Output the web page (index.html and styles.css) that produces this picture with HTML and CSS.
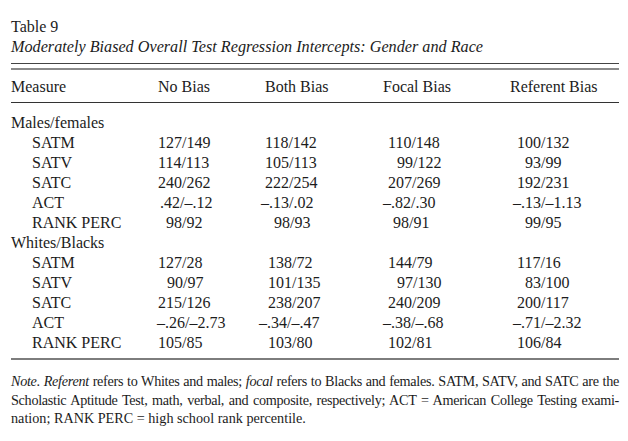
FILE: index.html
```html
<!DOCTYPE html>
<html>
<head>
<meta charset="utf-8">
<link rel="stylesheet" href="styles.css">
</head>
<body>
<div class="page">
  <div class="caption">Table 9</div>
  <div class="title">Moderately Biased Overall Test Regression Intercepts: Gender and Race</div>
  <div class="rule-top"></div>
  <div class="rule-double"></div>
  <div class="grid head">
    <div>Measure</div>
    <div>No Bias</div>
    <div>Both Bias</div>
    <div class="m-5">Focal Bias</div>
    <div class="m-7">Referent Bias</div>
  </div>
  <div class="rule-head"></div>
  <div class="grid body">
    <div class="group">Males/females</div>
    <div class="sub">SATM</div><div>127/149</div><div>118/142</div><div>110/148</div><div>100/132</div>
    <div class="sub">SATV</div><div>114/113</div><div>105/113</div><div class="m9">99/122</div><div class="m8">93/99</div>
    <div class="sub">SATC</div><div>240/262</div><div>222/254</div><div>207/269</div><div>192/231</div>
    <div class="sub">ACT</div><div class="m2">.42/–.12</div><div class="m-4">–.13/.02</div><div class="m-5">–.82/.30</div><div class="m-4">–.13/–1.13</div>
    <div class="sub">RANK PERC</div><div class="m8">98/92</div><div class="m9">98/93</div><div class="m5">98/91</div><div class="m8">99/95</div>
    <div class="group">Whites/Blacks</div>
    <div class="sub">SATM</div><div>127/28</div><div class="m3">138/72</div><div>144/79</div><div>117/16</div>
    <div class="sub">SATV</div><div class="m9">90/97</div><div class="m3">101/135</div><div class="m9">97/130</div><div class="m8">83/100</div>
    <div class="sub">SATC</div><div>215/126</div><div class="m3">238/207</div><div>240/209</div><div>200/117</div>
    <div class="sub">ACT</div><div class="m-1">–.26/–2.73</div><div class="m-6">–.34/–.47</div><div class="m-5">–.38/–.68</div><div class="m-4">–.71/–2.32</div>
    <div class="sub">RANK PERC</div><div>105/85</div><div class="m3">103/80</div><div>102/81</div><div>106/84</div>
  </div>
  <div class="rule-bottom"></div>
  <div class="note">
    <div class="line"><i>Note</i>. <i>Referent</i> refers to Whites and males; <i>focal</i> refers to Blacks and females. SATM, SATV, and SATC are the</div>
    <div class="line">Scholastic Aptitude Test, math, verbal, and composite, respectively; ACT = American College Testing exami-</div>
    <div class="last">nation; RANK PERC = high school rank percentile.</div>
  </div>
</div>
</body>
</html>
```

FILE: styles.css
```css
html, body {
  margin: 0;
  padding: 0;
  background: #fff;
}
body {
  font-family: "Liberation Serif", "Times New Roman", serif;
  color: #1c1c1c;
  font-size: 16px;
}
.page {
  width: 608px;
  padding: 17px 0 0 11px;
}
.caption {
  line-height: 20px;
}
.title {
  font-style: italic;
  font-size: 16.2px;
  line-height: 21px;
}
.rule-top {
  margin-top: 5px;
  height: 1px;
  background: #444;
}
.rule-double {
  margin-top: 4px;
  height: 2px;
  background: #8a8a8a;
}
.grid {
  display: grid;
  grid-template-columns: 147px 107px 123px 129px 1fr;
  line-height: 20px;
  white-space: nowrap;
}
.head {
  padding: 7px 0 5px;
}
.rule-head {
  height: 1px;
  background: #333;
}
.body {
  padding: 10px 0 5px;
}
.group {
  grid-column: 1 / -1;
}
.sub {
  padding-left: 21px;
}
.rule-bottom {
  height: 2px;
  background: #7d7d7d;
}
.note {
  margin-top: 12px;
  font-size: 14.2px;
  line-height: 18.5px;
  white-space: nowrap;
}
.line {
  letter-spacing: -0.3px;
  word-spacing: -1.5px;
  text-align: justify;
  text-align-last: justify;
}
.m-7 { margin-left: -7px; }
.m-6 { margin-left: -6px; }
.m-5 { margin-left: -5px; }
.m-4 { margin-left: -4px; }
.m-1 { margin-left: -1px; }
.m2 { margin-left: 2px; }
.m3 { margin-left: 3px; }
.m5 { margin-left: 5px; }
.m8 { margin-left: 8px; }
.m9 { margin-left: 9px; }
```
